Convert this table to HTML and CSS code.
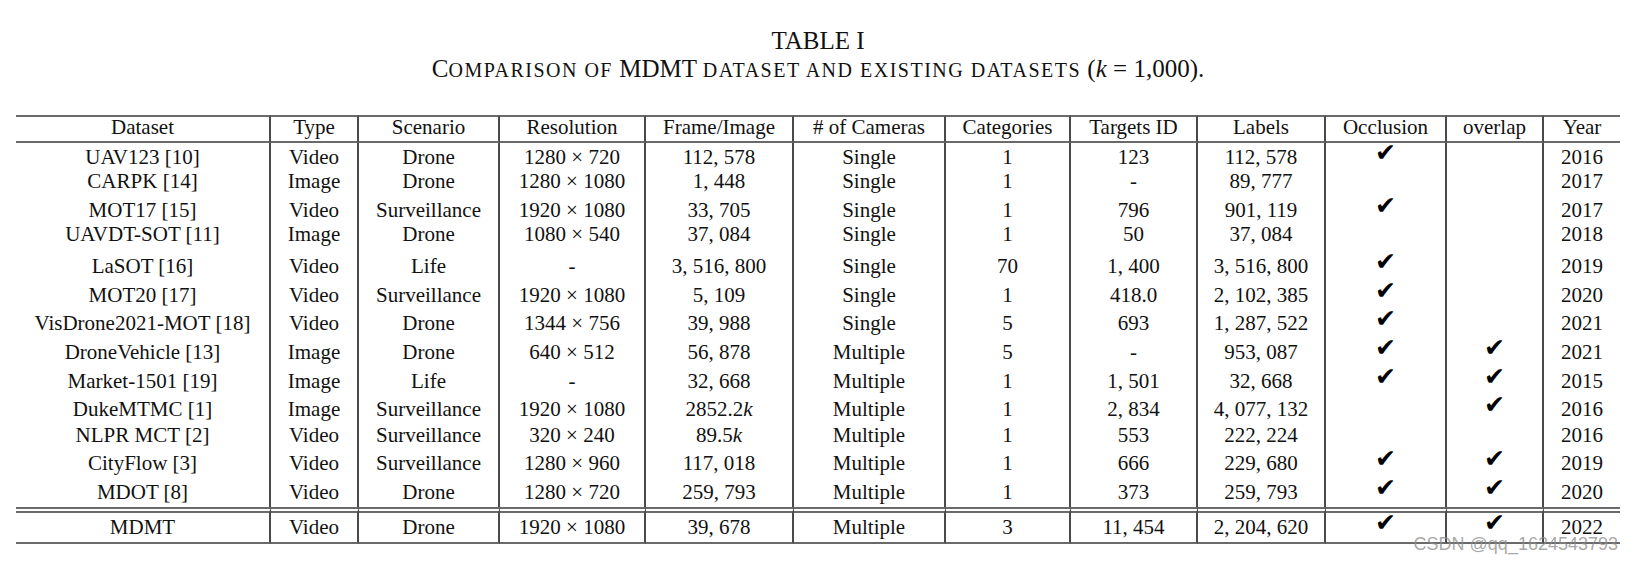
FILE: index.html
```html
<!DOCTYPE html>
<html lang="en">
<head>
<meta charset="utf-8">
<title>Table I</title>
<link rel="stylesheet" href="styles.css">
</head>
<body>
<div class="page">
  <div class="caption">
    <div class="cap-title">TABLE I</div>
    <div class="cap-sub">C<span class="sc">omparison of</span> MDMT <span class="sc">dataset and existing datasets</span> (<i class="mi">k</i> = 1,000).</div>
  </div>
  <table class="cmp">
    <colgroup>
      <col class="w-ds"><col class="w-type"><col class="w-scn"><col class="w-res"><col class="w-frm"><col class="w-cam">
      <col class="w-cat"><col class="w-tid"><col class="w-lab"><col class="w-occ"><col class="w-ovl"><col class="w-yr">
    </colgroup>
    <thead>
      <tr class="hd">
        <th>Dataset</th><th>Type</th><th>Scenario</th><th>Resolution</th><th>Frame/Image</th><th># of Cameras</th>
        <th>Categories</th><th>Targets ID</th><th>Labels</th><th>Occlusion</th><th>overlap</th><th>Year</th>
      </tr>
    </thead>
    <tbody>
      <tr class="r23"><td>UAV123 [10]</td><td>Video</td><td>Drone</td><td>1280 × 720</td><td>112, 578</td><td>Single</td><td>1</td><td>123</td><td>112, 578</td><td><span class="ck">✔</span></td><td></td><td>2016</td></tr>
      <tr class="r29"><td>CARPK [14]</td><td>Image</td><td>Drone</td><td>1280 × 1080</td><td>1, 448</td><td>Single</td><td>1</td><td>-</td><td>89, 777</td><td></td><td></td><td>2017</td></tr>
      <tr class="r24"><td>MOT17 [15]</td><td>Video</td><td>Surveillance</td><td>1920 × 1080</td><td>33, 705</td><td>Single</td><td>1</td><td>796</td><td>901, 119</td><td><span class="ck">✔</span></td><td></td><td>2017</td></tr>
      <tr class="r32"><td>UAVDT-SOT [11]</td><td>Image</td><td>Drone</td><td>1080 × 540</td><td>37, 084</td><td>Single</td><td>1</td><td>50</td><td>37, 084</td><td></td><td></td><td>2018</td></tr>
      <tr class="r29"><td>LaSOT [16]</td><td>Video</td><td>Life</td><td>-</td><td>3, 516, 800</td><td>Single</td><td>70</td><td>1, 400</td><td>3, 516, 800</td><td><span class="ck">✔</span></td><td></td><td>2019</td></tr>
      <tr class="r28"><td>MOT20 [17]</td><td>Video</td><td>Surveillance</td><td>1920 × 1080</td><td>5, 109</td><td>Single</td><td>1</td><td>418.0</td><td>2, 102, 385</td><td><span class="ck">✔</span></td><td></td><td>2020</td></tr>
      <tr class="r29"><td>VisDrone2021-MOT [18]</td><td>Video</td><td>Drone</td><td>1344 × 756</td><td>39, 988</td><td>Single</td><td>5</td><td>693</td><td>1, 287, 522</td><td><span class="ck">✔</span></td><td></td><td>2021</td></tr>
      <tr class="r29"><td>DroneVehicle [13]</td><td>Image</td><td>Drone</td><td>640 × 512</td><td>56, 878</td><td>Multiple</td><td>5</td><td>-</td><td>953, 087</td><td><span class="ck">✔</span></td><td><span class="ck">✔</span></td><td>2021</td></tr>
      <tr class="r28"><td>Market-1501 [19]</td><td>Image</td><td>Life</td><td>-</td><td>32, 668</td><td>Multiple</td><td>1</td><td>1, 501</td><td>32, 668</td><td><span class="ck">✔</span></td><td><span class="ck">✔</span></td><td>2015</td></tr>
      <tr class="r26"><td>DukeMTMC [1]</td><td>Image</td><td>Surveillance</td><td>1920 × 1080</td><td>2852.2<i class="mi">k</i></td><td>Multiple</td><td>1</td><td>2, 834</td><td>4, 077, 132</td><td></td><td><span class="ck">✔</span></td><td>2016</td></tr>
      <tr class="r28"><td>NLPR MCT [2]</td><td>Video</td><td>Surveillance</td><td>320 × 240</td><td>89.5<i class="mi">k</i></td><td>Multiple</td><td>1</td><td>553</td><td>222, 224</td><td></td><td></td><td>2016</td></tr>
      <tr class="r29"><td>CityFlow [3]</td><td>Video</td><td>Surveillance</td><td>1280 × 960</td><td>117, 018</td><td>Multiple</td><td>1</td><td>666</td><td>229, 680</td><td><span class="ck">✔</span></td><td><span class="ck">✔</span></td><td>2019</td></tr>
      <tr class="r29"><td>MDOT [8]</td><td>Video</td><td>Drone</td><td>1280 × 720</td><td>259, 793</td><td>Multiple</td><td>1</td><td>373</td><td>259, 793</td><td><span class="ck">✔</span></td><td><span class="ck">✔</span></td><td>2020</td></tr>
    </tbody>
    <tbody class="ours">
      <tr class="r37"><td>MDMT</td><td>Video</td><td>Drone</td><td>1920 × 1080</td><td>39, 678</td><td>Multiple</td><td>3</td><td>11, 454</td><td>2, 204, 620</td><td><span class="ck">✔</span></td><td><span class="ck">✔</span></td><td>2022</td></tr>
    </tbody>
  </table>
  <div class="watermark">CSDN @qq_1624543793</div>
</div>
</body>
</html>
```

FILE: styles.css
```css
html, body {
  margin: 0;
  padding: 0;
  background: #ffffff;
}

.page {
  position: relative;
  width: 1633px;
  height: 564px;
  overflow: hidden;
  font-family: "Liberation Serif", "Times New Roman", serif;
  color: #111111;
}

.caption {
  margin-left: 16px;
  width: 1604px;
  padding-top: 27px;
  text-align: center;
  font-size: 25px;
  line-height: 28px;
}

.cap-title,
.cap-sub {
  height: 28px;
}

.sc {
  text-transform: uppercase;
  font-size: 20px;
  line-height: 20px;
  letter-spacing: 1.5px;
}

.mi {
  font-style: italic;
}

.cmp {
  margin-top: 32px;
  margin-left: 16px;
  width: 1604px;
  table-layout: fixed;
  border-collapse: separate;
  border-spacing: 0;
  font-size: 21px;
}

.w-ds { width: 255px; }
.w-type { width: 88px; }
.w-scn { width: 141px; }
.w-res { width: 146px; }
.w-frm { width: 148px; }
.w-cam { width: 152px; }
.w-cat { width: 125px; }
.w-tid { width: 127px; }
.w-lab { width: 128px; }
.w-occ { width: 121px; }
.w-ovl { width: 97px; }
.w-yr { width: 76px; }

.cmp th,
.cmp td {
  padding: 5px 0 0 0;
  text-align: center;
  vertical-align: top;
  white-space: nowrap;
  line-height: 18px;
  font-weight: normal;
}

.cmp th:not(:last-child),
.cmp td:not(:last-child) {
  border-right: 2px solid #4a4a4a;
}

.cmp th {
  padding-top: 0;
  line-height: 20px;
  border-top: 2px solid #6a6a6a;
  border-bottom: 2px solid #6a6a6a;
}

.hd { height: 28px; }
.r23 { height: 23px; }
.r24 { height: 24px; }
.r26 { height: 26px; }
.r28 { height: 28px; }
.r29 { height: 29px; }
.r32 { height: 32px; }
.r37 { height: 37px; }

.ours td {
  border-top: 6px double #6a6a6a;
  border-bottom: 2px solid #6a6a6a;
}

.ck {
  display: inline-block;
  font-family: "DejaVu Sans", sans-serif;
  font-size: 25px;
  line-height: 18px;
  color: #000000;
  transform: translateY(-4px);
}

.watermark {
  position: absolute;
  right: 15px;
  top: 534px;
  font-family: "Liberation Sans", Arial, sans-serif;
  font-size: 18px;
  line-height: 20px;
  color: rgba(140, 140, 140, 0.75);
}
```
